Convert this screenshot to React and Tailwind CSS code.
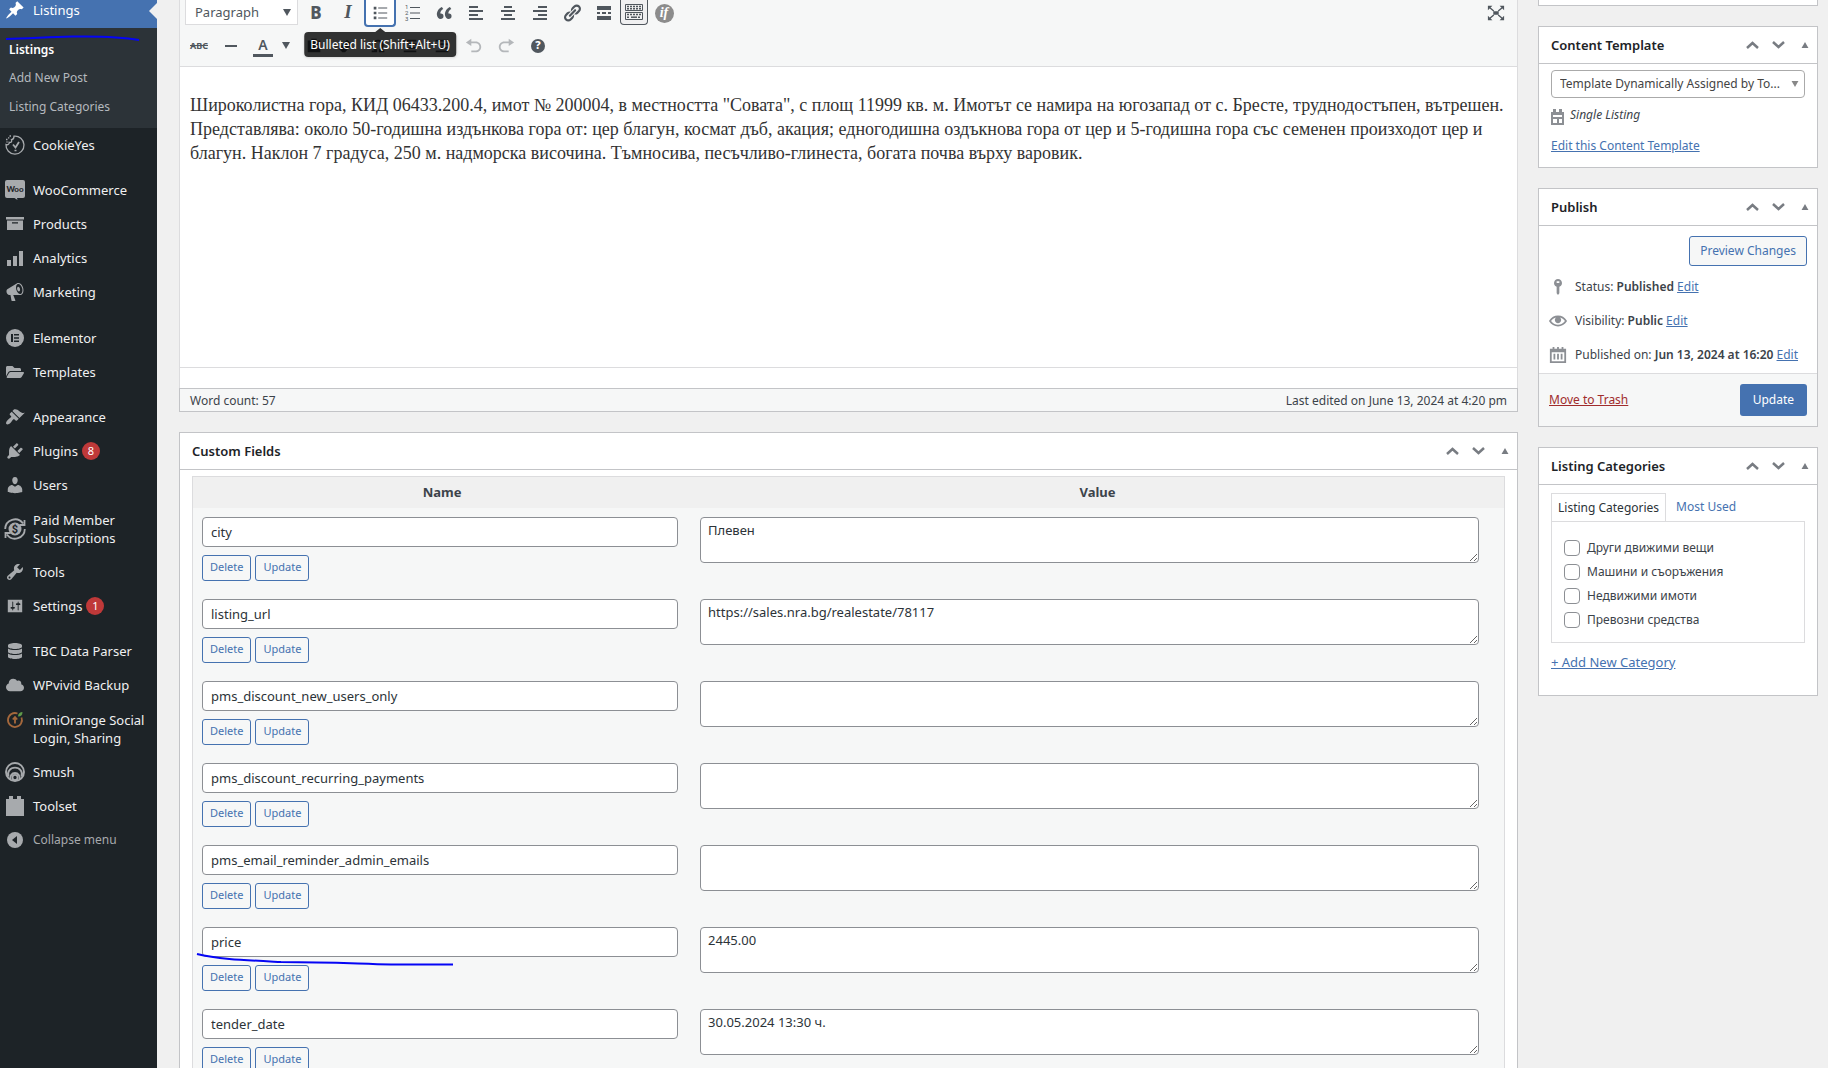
import React, { useState } from "react";
import { FaFolderOpen, FaDatabase, FaCloud } from "react-icons/fa";

const PATHS = {
  pin: "M10.44 3.02l1.82-1.82 6.36 6.35-1.83 1.82c-1.05-.68-2.48-.57-3.41.36l-.75.75c-.92.93-1.04 2.35-.35 3.41l-1.83 1.82-2.41-2.41-2.8 2.79c-.42.42-3.38 2.71-3.8 2.29s1.86-3.39 2.28-3.81l2.79-2.79L4.1 9.36l1.83-1.82c1.05.69 2.48.57 3.4-.36l.75-.75c.93-.92 1.05-2.35.36-3.41z",
  archive:
    "M1 3h18v2.500H1zM2 6.500h16V16H2zM7 8.200v1.300h6V8.200z",
  chart: "M2 12h4v6H2zM8 8h4v10H8zM14 3h4v15h-4z",
  megaphone:
    "M18.15 5.94c.46 1.62.38 3.22-.02 4.48-.42 1.28-1.26 2.18-2.3 2.48-.16.06-.26.06-.4.06-.06.02-.12.02-.18.02-.06.02-.14.02-.22.02h-6.8l2.22 5.5c.02.14-.06.26-.14.34-.08.1-.24.16-.34.16H6.95c-.1 0-.26-.06-.34-.16-.08-.08-.16-.2-.14-.34l-1-5.5H4.25l-.02-.02c-.5.06-1.08-.18-1.54-.62s-.88-1.08-1.06-1.88c-.24-.8-.2-1.56-.02-2.2.18-.62.58-1.08 1.06-1.3l.02-.02 9-5.4c.1-.06.18-.1.24-.16.06-.04.14-.08.24-.12.16-.08.28-.12.5-.18 1.04-.3 2.24.1 3.22.98s1.84 2.24 2.26 3.86zm-2.58 5.98h-.02c.4-.1.74-.34 1.04-.7.58-.7.86-1.76.86-3.04 0-.64-.1-1.3-.28-1.98-.34-1.36-1.02-2.5-1.78-3.24s-1.68-1.1-2.46-.88c-.82.22-1.4.96-1.7 2-.32 1.04-.28 2.36.06 3.72.38 1.36 1 2.5 1.8 3.24.78.74 1.62 1.1 2.48.88zm-2.54-7.08c.22-.04.42-.02.62.04.38.16.76.48 1.02 1s.42 1.2.42 1.78c0 .3-.04.56-.12.8-.18.48-.44.84-.86.94-.34.1-.8-.06-1.14-.4s-.64-.86-.78-1.5c-.18-.62-.12-1.24.02-1.72s.48-.84.82-.94z",
  brush:
    "M14.48 11.06L7.41 3.99l1.5-1.5c.5-.56 2.3-.47 3.51.32 1.21.8 1.43 1.28 2.91 2.1 1.18.64 2.45 1.26 4.45.85zm-.71.71L6.7 4.7 4.93 6.47c-.39.39-.39 1.02 0 1.41l1.06 1.06c.39.39.39 1.03 0 1.42-.6.6-1.43 1.11-2.21 1.69-.35.26-.7.53-1.01.84C1.43 14.23.4 16.08 1.4 17.07c.99 1 2.84-.03 4.18-1.36.31-.31.58-.66.85-1.02.57-.78 1.08-1.61 1.69-2.21.39-.39 1.02-.39 1.41 0l1.06 1.06c.39.39 1.02.39 1.41 0z",
  plug: "M13.11 4.36L9.87 7.6 8 5.73l3.24-3.24c.35-.34 1.05-.2 1.56.32.52.51.66 1.21.31 1.55zm-8 1.77l.91-1.12 9.01 9.01-1.19.84c-.71.71-2.63 1.16-3.82 1.16H6.14L4.9 17.26c-.59.59-1.54.59-2.12 0-.59-.58-.59-1.53 0-2.12l1.24-1.24v-3.88c0-1.13.4-3.19 1.09-3.89zm7.26 3.97l3.24-3.24c.34-.35 1.04-.21 1.55.31.52.51.66 1.21.31 1.55l-3.24 3.25z",
  user: "M10 9.25c-2.27 0-2.73-3.44-2.73-3.44C7 4.02 7.82 2 9.97 2c2.16 0 2.98 2.02 2.71 3.81 0 0-.41 3.44-2.68 3.44zm0 2.57L12.72 10c2.39 0 4.52 2.33 4.52 4.53v2.49s-3.65 1.13-7.24 1.13c-3.65 0-7.24-1.13-7.24-1.13v-2.49c0-2.25 1.94-4.48 4.47-4.48z",
  wrench:
    "M16.68 9.77c-1.34 1.34-3.3 1.67-4.95.99l-5.41 6.52c-.99.99-2.59.99-3.58 0s-.99-2.59 0-3.57l6.52-5.42c-.68-1.65-.35-3.61.99-4.95 1.28-1.28 3.12-1.62 4.72-1.06l-2.89 2.89 2.82 2.82 2.86-2.87c.53 1.58.18 3.39-1.08 4.65zM3.81 16.21c.4.39 1.04.39 1.43 0 .4-.4.4-1.04 0-1.43-.39-.4-1.03-.4-1.43 0-.39.39-.39 1.03 0 1.43z",
  sliders:
    "M18 17V3H2v14h16zM8 11h1c.55 0 1 .45 1 1s-.45 1-1 1H8v1.5c0 .28-.22.5-.5.5s-.5-.22-.5-.5V13H6c-.55 0-1-.45-1-1s.45-1 1-1h1V5.500c0-.28.22-.5.5-.5s.5.22.5.5V11zm5-2h-1c-.55 0-1-.45-1-1s.45-1 1-1h1V5.500c0-.28.22-.5.5-.5s.5.22.5.5V7h1c.55 0 1 .45 1 1s-.45 1-1 1h-1v5.500c0 .28-.22.5-.5.5s-.5-.22-.5-.5V9z",
  block: "M1 3h3V0h4v3h4V0h4v3h3v17H1z",
  quote:
    "M9.49 13.22c0-.74-.2-1.38-.61-1.9-.62-.78-1.83-.88-2.53-.72-.29-1.65 1.11-3.75 2.92-4.65L7.88 4c-2.73 1.3-5.42 4.28-4.96 8.05C3.21 14.43 4.59 16 6.54 16c.85 0 1.56-.25 2.12-.75s.83-1.18.83-2.03zm8.05 0c0-.74-.2-1.38-.61-1.9-.63-.78-1.83-.88-2.53-.72-.29-1.65 1.11-3.75 2.92-4.65L15.93 4c-2.73 1.3-5.41 4.28-4.95 8.05.29 2.38 1.66 3.95 3.61 3.95.85 0 1.56-.25 2.12-.75s.83-1.18.83-2.03z",
  alignLeft: "M3 3h9v2H3zM3 7h14v2H3zM3 11h9v2H3zM3 15h14v2H3z",
  alignCenter: "M6 3h8v2H6zM3 7h14v2H3zM6 11h8v2H6zM3 15h14v2H3z",
  alignRight: "M8 3h9v2H8zM3 7h14v2H3zM8 11h9v2H8zM3 15h14v2H3z",
  link: "M17.74 2.76c1.68 1.69 1.68 4.41 0 6.1l-1.53 1.52c-1.12 1.12-2.7 1.47-4.14 1.09l2.62-2.61.76-.77.76-.76c.84-.84.84-2.2 0-3.04-.84-.85-2.2-.85-3.04 0l-.77.76-3.38 3.38c-.37-1.44-.02-3.02 1.1-4.14l1.52-1.53c1.69-1.68 4.42-1.68 6.1 0zM8.59 13.43l5.34-5.34c.42-.42.42-1.1 0-1.52-.44-.43-1.13-.39-1.53 0l-5.33 5.34c-.42.42-.42 1.1 0 1.52.44.43 1.13.39 1.52 0zm-.76 2.29l4.14-4.15c.38 1.44.03 3.02-1.09 4.14l-1.52 1.53c-1.69 1.68-4.41 1.68-6.1 0-1.68-1.68-1.68-4.42 0-6.1l1.53-1.52c1.12-1.12 2.7-1.47 4.14-1.1l-4.14 4.15c-.85.84-.85 2.2 0 3.05.84.84 2.2.84 3.04 0z",
  more: "M3 3h14v4H3zM3 9h3v2H3zM8 9h4v2H8zM14 9h3v2h-3zM3 13h14v4H3z",
  bullets:
    "M3 3h3v3H3zM3 8.500h3v3H3zM3 14h3v3H3zM8 4h10v1H8zM8 9.500h10v1H8zM8 15h10v1H8z",
  undo: "M12 5H7V2L1 6l6 4V7h5c2.200 0 4 1.800 4 4s-1.800 4-4 4H7v2h5c3.300 0 6-2.700 6-6s-2.700-6-6-6z",
  redo: "M8 5h5V2l6 4-6 4V7H8c-2.200 0-4 1.800-4 4s1.800 4 4 4h5v2H8c-3.300 0-6-2.700-6-6s2.700-6 6-6z",
  paste: "M3 4h4V2h6v2h4v13H3z",
  eraser: "M11 3l6 5-8 9H6l-4-4z",
  omega: "M3 17v-2h3C2 11 3 3 10 3s8 8 4 12h3v2h-6v-3c4-2 3-9-1-9s-5 7-1 9v3z",
  indent: "M3 3h14v2H3zM8 7h9v2H8zM8 11h9v2H8zM3 15h14v2H3z",
  expand:
    "M7 8h6v4H7zM1 2h5L1 7zM19 2v5l-5-5zM1 18v-5l5 5zM19 18h-5l5-5zM3 5l1-1 4 3.300-1 1zM16 4l1 1-4 3.300-1-1zM3 15l1 1 4-3.300-1-1zM17 15l-1 1-4-3.300 1-1z",
  key: "M10 1a4.500 4.500 0 0 1 1.500 8.700V17L10 19l-1.500-2V9.700A4.500 4.500 0 0 1 10 1zM8.500 3.500v2h3v-2z",
  eye: "M19.7 9.4C17.7 6 14 3.900 10 3.900S2.300 6 .3 9.400L0 10l.3.6c2 3.400 5.700 5.500 9.700 5.500s7.700-2.100 9.700-5.500l.3-.6-.3-.6zM10 14.100c-3.100 0-6-1.600-7.700-4.100C3.600 8 5.700 6.600 8 6.100c-.9.6-1.500 1.700-1.500 2.900 0 1.900 1.600 3.500 3.500 3.500s3.500-1.600 3.500-3.500c0-1.200-.6-2.300-1.500-2.900 2.300.5 4.400 1.900 5.700 3.900-1.700 2.500-4.600 4.100-7.700 4.100z",
  calendar:
    "M1 3h3V1h2v2h3V1h2v2h3V1h2v2h3v16H1zM3 7v10h14V7zM5 8.500h2V15H5zM9 8.500h2V15H9zM13 8.500h2V15h-2z",
};

function Glyph({ name, className = "size-5" }) {
  return (
    <svg viewBox="0 0 20 20" fill="currentColor" fillRule="evenodd" className={className} aria-hidden="true">
      <path d={PATHS[name]} />
    </svg>
  );
}

function CookieIcon() {
  return (
    <svg viewBox="0 0 20 20" className="size-5" fill="none" stroke="currentColor" strokeWidth="1.3" aria-hidden="true">
      <path d="M9 1.200a9 9 0 1 1-8 8.300c2 .8 3.500-.5 3.200-2.200 2 .5 3-1 2.300-2.600C8 4.500 9 3 9 1.200z" />
      <path d="M8 9.500l2.500 3L14 7" strokeWidth="1.800" />
      <path d="M4.500 1h1.500M1 4.500h1.500M3 2.800h1.300M9.500 15.500h2M1.500 7h1" />
    </svg>
  );
}

function WooIcon() {
  return (
    <svg viewBox="0 0 20 20" className="size-5" aria-hidden="true">
      <path fill="currentColor" d="M2 0h16a2 2 0 0 1 2 2v14a2 2 0 0 1-2 2h-6l.5 2-3-2H2a2 2 0 0 1-2-2V2a2 2 0 0 1 2-2z" />
      <text x="10" y="12" textAnchor="middle" fontSize="8" fontWeight="900" fill="#1d2327" fontFamily="Lato, sans-serif">
        Woo
      </text>
    </svg>
  );
}

function ElementorIcon() {
  return (
    <svg viewBox="0 0 20 20" className="size-5" aria-hidden="true">
      <circle cx="10" cy="10" r="9" fill="currentColor" />
      <path fill="#1d2327" d="M6 6h2v8H6zM9 6h5v1.500H9zM9 9.200h5v1.500H9zM9 12.500h5V14H9z" />
    </svg>
  );
}

function MemberIcon() {
  return (
    <svg viewBox="0 0 22 22" className="size-[22px] shrink-0" fill="none" stroke="currentColor" aria-hidden="true">
      <circle cx="11" cy="11" r="6.500" fill="currentColor" stroke="none" />
      <path strokeWidth="1.800" d="M1.200 11A9.800 9.800 0 0 1 19 5.500M20.800 11A9.800 9.800 0 0 1 3 16.500M20.500 2v5h-5M1.500 20v-5h5" />
      <text x="11" y="15" textAnchor="middle" fontSize="11" fontWeight="700" fill="#1d2327" stroke="none" fontFamily="Roboto, sans-serif">
        $
      </text>
    </svg>
  );
}

function OrangeIcon() {
  return (
    <svg viewBox="0 0 20 20" className="size-5" fill="none" aria-hidden="true">
      <path d="M12.500 3.500A7 7 0 1 0 16.500 7.500" stroke="#a5683c" strokeWidth="1.800" />
      <path d="M10 13.500V8.500M7.800 9.500L10 7l2.200 2.500" stroke="#a5683c" strokeWidth="1.800" />
      <path d="M13 6.500c0-3 2-4.500 4.500-4.500 0 3-1.500 4.500-4.500 4.500z" fill="#5f9a4a" />
    </svg>
  );
}

function SmushIcon() {
  return (
    <svg viewBox="0 0 20 20" className="size-5" fill="none" stroke="currentColor" strokeWidth="1.900" aria-hidden="true">
      <circle cx="10" cy="10" r="9" />
      <path d="M3.500 14.500a7 6.500 0 1 1 13 0" />
      <path d="M5.500 17.500a4.700 5 0 1 1 9 0" />
      <circle cx="10" cy="15.500" r="2.600" />
    </svg>
  );
}

function CollapseIcon() {
  return (
    <svg viewBox="0 0 20 20" className="size-5" aria-hidden="true">
      <circle cx="10" cy="10" r="8" fill="currentColor" />
      <path fill="#1d2327" d="M12 6v8l-5-4z" />
    </svg>
  );
}

const menu = [
  { label: "CookieYes", icon: <CookieIcon /> },
  { label: "WooCommerce", icon: <WooIcon />, gap: "mt-[11px]" },
  { label: "Products", icon: <Glyph name="archive" /> },
  { label: "Analytics", icon: <Glyph name="chart" /> },
  { label: "Marketing", icon: <Glyph name="megaphone" /> },
  { label: "Elementor", icon: <ElementorIcon />, gap: "mt-3" },
  { label: "Templates", icon: <FaFolderOpen className="size-[18px]" /> },
  { label: "Appearance", icon: <Glyph name="brush" />, gap: "mt-[11px]" },
  { label: "Plugins", icon: <Glyph name="plug" />, badge: 8 },
  { label: "Users", icon: <Glyph name="user" /> },
  { label: "Paid Member Subscriptions", icon: <MemberIcon />, align: "items-center pt-[9px] pb-2" },
  { label: "Tools", icon: <Glyph name="wrench" /> },
  { label: "Settings", icon: <Glyph name="sliders" className="size-[18px]" />, badge: 1 },
  { label: "TBC Data Parser", icon: <FaDatabase className="size-4" />, gap: "mt-[11px]" },
  { label: "WPvivid Backup", icon: <FaCloud className="size-[18px]" /> },
  { label: "miniOrange Social Login, Sharing", icon: <OrangeIcon />, align: "items-start pt-[9px] pb-2" },
  { label: "Smush", icon: <SmushIcon /> },
  { label: "Toolset", icon: <Glyph name="block" /> },
];

const fields = [
  { name: "city", value: "Плевен" },
  { name: "listing_url", value: "https://sales.nra.bg/realestate/78117" },
  { name: "pms_discount_new_users_only", value: "" },
  { name: "pms_discount_recurring_payments", value: "" },
  { name: "pms_email_reminder_admin_emails", value: "" },
  { name: "price", value: "2445.00", marked: true },
  { name: "tender_date", value: "30.05.2024 13:30 ч." },
];

const categories = [
  "Други движими вещи",
  "Машини и съоръжения",
  "Недвижими имоти",
  "Превозни средства",
];

function Sidebar() {
  return (
    <nav className="w-[157px] shrink-0 bg-[#1d2327] text-[13px] leading-[18px] text-[#f0f0f1]">
      <a href="#listings" className="flex h-7 items-start justify-between bg-[#4572b0] text-white">
        <span className="flex items-center">
          <span className="flex w-[33px] justify-center pr-[3px]">
            <Glyph name="pin" />
          </span>
          <span>Listings</span>
        </span>
        <svg viewBox="0 0 8 16" className="mt-[3px] h-4 w-2" fill="#f0f0f0" aria-hidden="true">
          <path d="M8 0v16L0 8z" />
        </svg>
      </a>
      <ul className="relative h-[100px] bg-[#2c3338] pt-[7px] text-[12px] text-[#b4b9be]">
        <svg viewBox="0 0 140 8" className="pointer-events-none absolute top-[6px] left-0 h-2 w-[140px]" fill="none" stroke="#0505f5" strokeWidth="2" aria-hidden="true">
          <path d="M6 5c20 0 40-2 66-2.500C100 2 120 2.500 139 6" />
        </svg>
        <li className="flex h-[29px] items-center px-[9px] font-semibold text-white">
          <a href="#all">Listings</a>
        </li>
        <li className="flex h-[28px] items-center px-[9px]">
          <a href="#new">Add New Post</a>
        </li>
        <li className="flex h-[29px] items-center px-[9px]">
          <a href="#categories">Listing Categories</a>
        </li>
      </ul>
      <ul>
        {menu.map((item) => (
          <li key={item.label} className={item.gap}>
            <a href="#menu" className={`flex min-h-[34px] ${item.align || "items-center py-2"}`}>
              <span className="flex h-[18px] w-[33px] shrink-0 items-center justify-center pr-[3px] text-[#a7aaad]">
                {item.icon}
              </span>
              <span className="pr-2">{item.label}</span>
              {item.badge && (
                <span className="-ml-1 flex size-[18px] items-center justify-center rounded-full bg-[#bf3939] text-[11px] text-white">
                  {item.badge}
                </span>
              )}
            </a>
          </li>
        ))}
      </ul>
      <button className="flex h-[34px] items-center text-[12px] text-[#a7aaad]">
        <span className="flex w-[33px] justify-center pr-[3px]">
          <CollapseIcon />
        </span>
        Collapse menu
      </button>
    </nav>
  );
}

function ToolButton({ label, children, className = "w-8" }) {
  return (
    <button aria-label={label} className={`flex h-[25px] shrink-0 items-center justify-center ${className}`}>
      {children}
    </button>
  );
}

function NumberedIcon() {
  return (
    <svg viewBox="0 0 20 20" className="size-5" fill="currentColor" aria-hidden="true">
      <path d="M8 4h10v1H8zM8 9.500h10v1H8zM8 15h10v1H8z" />
      <g fontSize="6" fontFamily="Roboto, sans-serif">
        <text x="3" y="6">1</text>
        <text x="3" y="12">2</text>
        <text x="3" y="18">3</text>
      </g>
    </svg>
  );
}

function KeyboardIcon() {
  return (
    <svg viewBox="0 0 20 20" className="size-5" fill="none" stroke="currentColor" aria-hidden="true">
      <path d="M1.500 2.500h17v6h-17zM1.500 10.500h17v7h-17z" />
      <path strokeWidth="1.500" strokeDasharray="2 1" d="M3 4.500h14M3 6.800h14M3 12.500h14M3 15.200h3M14 15.200h3" />
      <path strokeWidth="1.500" d="M7 15.200h6" />
    </svg>
  );
}

function Toolbar() {
  return (
    <div className="h-[66px] border-x border-[#dcdcde] bg-[#f6f7f7] pl-[3px] text-[#50575e]">
      <div className="flex pl-0.5">
        <div className="relative mr-0.5 h-[25px] w-[113px] border border-t-0 border-[#dcdcde] bg-white">
          <select aria-label="Block format" className="h-[25px] w-full appearance-none pl-[9px] text-[13px]">
            <option>Paragraph</option>
          </select>
          <Caret className="absolute top-[9px] right-[6px] h-[7px] w-2" />
        </div>
        <ToolButton label="Bold">
          <span className="text-[17px] font-extrabold">B</span>
        </ToolButton>
        <ToolButton label="Italic">
          <span className="font-[Liberation_Serif,serif] text-[19px] font-bold italic">I</span>
        </ToolButton>
        <div className="relative">
          <ToolButton label="Bulleted list" className="-mb-0.5 h-[27px] w-8 rounded-b border-2 border-t-0 border-[#4572b0] bg-white">
            <Glyph name="bullets" className="size-[18px]" />
          </ToolButton>
          <div className="absolute top-[32px] left-1/2 z-10 -translate-x-1/2 rounded bg-black/80 px-[6px] text-[12px] leading-[25px] whitespace-nowrap text-white shadow">
            <span className="absolute -top-1 left-1/2 -translate-x-1/2 border-x-[5px] border-b-4 border-x-transparent border-b-black/80" />
            Bulleted list (Shift+Alt+U)
          </div>
        </div>
        <ToolButton label="Numbered list">
          <NumberedIcon />
        </ToolButton>
        <ToolButton label="Blockquote">
          <Glyph name="quote" />
        </ToolButton>
        <ToolButton label="Align left">
          <Glyph name="alignLeft" />
        </ToolButton>
        <ToolButton label="Align center">
          <Glyph name="alignCenter" />
        </ToolButton>
        <ToolButton label="Align right">
          <Glyph name="alignRight" />
        </ToolButton>
        <ToolButton label="Insert link">
          <Glyph name="link" />
        </ToolButton>
        <ToolButton label="Read more tag">
          <Glyph name="more" />
        </ToolButton>
        <ToolButton label="Toolbar toggle" className="w-7 rounded-b-sm border border-t-0 border-[#50575e] bg-[#f0f0f1]">
          <KeyboardIcon />
        </ToolButton>
        <ToolButton label="Conditional output">
          <span className="mt-0.5 flex size-[19px] items-center justify-center rounded-full bg-[#8c8c8c] pb-0.5 font-[Liberation_Serif,serif] text-[14px] font-bold text-white italic">
            if
          </span>
        </ToolButton>
        <ToolButton label="Fullscreen" className="mr-[5px] ml-auto w-8">
          <Glyph name="expand" className="size-[18px]" />
        </ToolButton>
      </div>
      <div className="mt-2 flex">
        <ToolButton label="Strikethrough">
          <span className="text-[9px] font-bold line-through">ABC</span>
        </ToolButton>
        <ToolButton label="Horizontal line">
          <span className="h-0.5 w-3 bg-current" />
        </ToolButton>
        <ToolButton label="Text color">
          <span className="w-5 border-b-[3px] border-current text-[14px] leading-[19px] font-semibold">A</span>
        </ToolButton>
        <button aria-label="Choose color" className="mr-[5px] flex w-[14px] items-center justify-center">
          <Caret className="h-[7px] w-2" />
        </button>
        <ToolButton label="Paste as text">
          <Glyph name="paste" className="size-[18px]" />
        </ToolButton>
        <ToolButton label="Clear formatting">
          <Glyph name="eraser" className="size-[18px]" />
        </ToolButton>
        <ToolButton label="Special character">
          <Glyph name="omega" className="size-[18px]" />
        </ToolButton>
        <ToolButton label="Decrease indent">
          <Glyph name="indent" className="size-[18px]" />
        </ToolButton>
        <ToolButton label="Increase indent">
          <Glyph name="indent" className="size-[18px]" />
        </ToolButton>
        <ToolButton label="Undo" className="w-8 text-[#b4b7ba]">
          <Glyph name="undo" className="size-[18px]" />
        </ToolButton>
        <ToolButton label="Redo" className="w-8 text-[#b4b7ba]">
          <Glyph name="redo" className="size-[18px]" />
        </ToolButton>
        <ToolButton label="Keyboard shortcuts">
          <span className="flex size-[14px] items-center justify-center rounded-full bg-[#50575e] text-[11px] font-extrabold text-white">
            ?
          </span>
        </ToolButton>
      </div>
    </div>
  );
}

function Caret({ className, up }) {
  return (
    <svg viewBox="0 0 8 7" className={`pointer-events-none ${className}`} fill="currentColor" aria-hidden="true">
      <path d={up ? "M4 0l4 7H0z" : "M0 0h8L4 7z"} />
    </svg>
  );
}

function Editor() {
  return (
    <section>
      <Toolbar />
      <div className="h-[302px] border border-[#dcdcde] bg-white pt-[26px] pr-0.5 pl-[10px] font-[Georgia,Liberation_Serif,serif] text-[18px] leading-6 text-[#333]">
        <p>
          Широколистна гора, КИД 06433.200.4, имот № 200004, в местността "Совата", с площ 11999 кв. м. Имотът се намира на
          югозапад от с. Бресте, труднодостъпен, вътрешен.
          <br />
          Представлява: около 50-годишна издънкова гора от: цер благун, космат дъб, акация; едногодишна оздъкнова гора от цер
          и 5-годишна гора със семенен произходот цер и
          <br />
          благун. Наклон 7 градуса, 250 м. надморска височина. Тъмносива, песъчливо-глинеста, богата почва върху варовик.
        </p>
      </div>
      <div className="h-5 border-x border-[#dcdcde] bg-white" />
      <div className="flex h-6 items-center justify-between border border-[#c3c4c7] bg-[#f6f7f7] px-[10px] pt-0.5 text-[12px] text-[#3c434a]">
        <span>Word count: 57</span>
        <span>Last edited on June 13, 2024 at 4:20 pm</span>
      </div>
    </section>
  );
}

function Box({ title, children, className = "" }) {
  return (
    <section className={`border border-[#c3c4c7] bg-white ${className}`}>
      <header className="flex h-[37px] items-center justify-between border-b border-[#c3c4c7] pr-2 pl-3">
        <h2 className="pt-px text-[13px] font-semibold text-[#1d2327]">{title}</h2>
        <div className="flex items-center gap-[13px] text-[#787c82]">
          <button aria-label={`Move ${title} up`}>
            <svg viewBox="0 0 13 8" className="h-2 w-[13px]" fill="none" stroke="currentColor" strokeWidth="2.500" aria-hidden="true">
              <path d="M1 7l5.500-5L12 7" />
            </svg>
          </button>
          <button aria-label={`Move ${title} down`}>
            <svg viewBox="0 0 13 8" className="h-2 w-[13px]" fill="none" stroke="currentColor" strokeWidth="2.500" aria-hidden="true">
              <path d="M1 1l5.500 5L12 1" />
            </svg>
          </button>
          <button aria-label={`Toggle ${title}`} className="ml-[3px]">
            <Caret up className="h-[6px] w-2" />
          </button>
        </div>
      </header>
      {children}
    </section>
  );
}

function SmallButton({ children }) {
  return (
    <button className="h-[26px] rounded-[3px] border border-[#4572b0] bg-[#f6f7f7] px-[7px] text-[11px] text-[#4572b0]">
      {children}
    </button>
  );
}

function CustomFields() {
  return (
    <Box title="Custom Fields" className="mt-5">
      <div className="px-3 pt-[6px]">
        <table className="w-full table-fixed border border-[#dcdcde] bg-[#f6f7f7] text-[13px] text-[#2c3338]">
          <thead>
            <tr className="h-[31px] bg-[#f0f0f0] text-[#3c434a]">
              <th className="w-[38%] p-0 font-bold">Name</th>
              <th className="p-0 font-bold">Value</th>
            </tr>
          </thead>
          <tbody>
            {fields.map((field) => (
              <tr key={field.name} className="h-[82px]">
                <td className="relative py-[9px] pr-[13px] pl-[9px] align-top">
                  <input
                    aria-label="Name"
                    defaultValue={field.name}
                    className="block h-[30px] w-full rounded border border-[#8c8f94] bg-white px-2"
                  />
                  <div className="mt-2 flex gap-1">
                    <SmallButton>Delete</SmallButton>
                    <SmallButton>Update</SmallButton>
                  </div>
                  {field.marked && (
                    <svg viewBox="0 0 258 14" className="pointer-events-none absolute top-[34px] left-[3px] h-[14px] w-[258px]" fill="none" stroke="#0505f5" strokeWidth="2" aria-hidden="true">
                      <path d="M1 2c20 5 45 6 84 8 50 0 80 2 110 2.500h62" />
                    </svg>
                  )}
                </td>
                <td className="py-[9px] pr-[25px] pl-[9px] align-top">
                  <textarea
                    aria-label="Value"
                    defaultValue={field.value}
                    className="block h-[46px] w-full resize rounded border border-[#8c8f94] bg-white px-[7px] py-[3px] leading-[18px]"
                  />
                </td>
              </tr>
            ))}
          </tbody>
        </table>
      </div>
    </Box>
  );
}

function Link({ children, className = "text-[#4572b0]" }) {
  return (
    <a href="#edit" className={`underline ${className}`}>
      {children}
    </a>
  );
}

function ContentTemplate() {
  return (
    <Box title="Content Template" className="mt-5">
      <div className="px-3 pt-[6px] pb-2">
        <div className="relative">
          <select
            aria-label="Content template"
            className="h-7 w-full appearance-none rounded border border-[#aaa] bg-white pr-5 pl-2 text-[12px] text-[#444]"
          >
            <option>Template Dynamically Assigned by To...</option>
          </select>
          <Caret className="absolute top-[11px] right-[6px] h-[6px] w-2 text-[#888]" />
        </div>
        <div className="mt-[7px] flex h-5 items-center gap-[6px] text-[12px] italic">
          <svg viewBox="0 0 13 16" className="mt-1 h-4 w-[13px]" fill="#8c8f94" fillRule="evenodd" aria-hidden="true">
            <path d="M0 3h2V0h3v3h3V0h3v3h2v13H0zM2 6v2h9V6zM2 10v4h4v-4zM8 10v4h3v-4z" />
          </svg>
          <em>Single Listing</em>
        </div>
        <p className="mt-3 h-[22px]">
          <Link>Edit this Content Template</Link>
        </p>
      </div>
    </Box>
  );
}

function StatusRow({ icon, label, value }) {
  return (
    <p className="flex h-[34px] items-center">
      <Glyph name={icon} className="mr-2 size-[18px] shrink-0 text-[#8c8f94]" />
      <span className="whitespace-nowrap">
        {label}: <b className="font-semibold">{value}</b> <Link>Edit</Link>
      </span>
    </p>
  );
}

function Publish() {
  return (
    <Box title="Publish" className="mt-5">
      <div className="px-[10px] pt-[10px]">
        <div className="mb-1 flex justify-end">
          <button className="h-[30px] rounded-[3px] border border-[#4572b0] bg-[#f6f7f7] px-[10px] text-[12px] text-[#4572b0]">
            Preview Changes
          </button>
        </div>
        <StatusRow icon="key" label="Status" value="Published" />
        <StatusRow icon="eye" label="Visibility" value="Public" />
        <StatusRow icon="calendar" label="Published on" value="Jun 13, 2024 at 16:20" />
      </div>
      <footer className="mt-px flex h-[53px] items-center justify-between border-t border-[#dcdcde] bg-[#f6f7f7] px-[10px]">
        <Link className="text-[#a02c2c]">Move to Trash</Link>
        <button className="h-8 rounded-[3px] bg-[#4572b0] px-[13px] text-[12px] text-white">Update</button>
      </footer>
    </Box>
  );
}

function ListingCategories() {
  const [tab, setTab] = useState("all");

  return (
    <Box title="Listing Categories" className="mt-5">
      <div className="px-3 pt-2 pb-6">
        <div className="flex">
          <button
            onClick={() => setTab("all")}
            className={tab === "all" ? "z-10 -mb-px h-7 border border-b-0 border-[#dcdcde] bg-white px-[6px] text-[#2c3338]" : "h-7 px-[6px] text-[#4572b0]"}
          >
            Listing Categories
          </button>
          <button
            onClick={() => setTab("used")}
            className={tab === "used" ? "z-10 -mb-px h-7 border border-b-0 border-[#dcdcde] bg-white px-[10px] text-[#2c3338]" : "h-7 px-[10px] text-[#4572b0]"}
          >
            Most Used
          </button>
        </div>
        <ul className="border border-[#dcdcde] px-3 pt-[14px] pb-[10px]">
          {categories.map((category) => (
            <li key={category} className="flex h-6 items-center">
              <label className="flex items-center gap-[7px]">
                <input type="checkbox" className="size-4 appearance-none rounded border border-[#8c8f94] bg-white" />
                {category}
              </label>
            </li>
          ))}
        </ul>
        <p className="mt-[10px] text-[13px] leading-[18px]">
          <Link>+ Add New Category</Link>
        </p>
      </div>
    </Box>
  );
}

export default function App() {
  return (
    <div className="flex h-screen overflow-hidden bg-[#f0f0f0] font-[Segoe_UI,Noto_Sans,sans-serif] text-[12px] text-[#3c434a]">
      <Sidebar />
      <main className="grid flex-1 grid-cols-[1fr_280px] items-start gap-x-5 pr-[10px] pl-[22px]">
        <div>
          <Editor />
          <CustomFields />
        </div>
        <aside>
          <div className="h-[6px] border border-t-0 border-[#c3c4c7] bg-white" />
          <ContentTemplate />
          <Publish />
          <ListingCategories />
        </aside>
      </main>
    </div>
  );
}
